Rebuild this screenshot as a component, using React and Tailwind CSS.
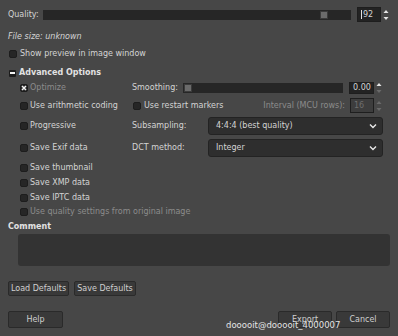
import React from 'react';

function Box({ checked }) {
  return (
    <span className="w-[8px] h-[8px] shrink-0 rounded-[2px] bg-[#262626] border border-[#1d1d1d] flex items-center justify-center">
      {checked && (
        <svg width="6" height="6" viewBox="0 0 6 6">
          <path d="M1 1 L5 5 M5 1 L1 5" stroke="#f2f2f2" strokeWidth="1.5" />
        </svg>
      )}
    </span>
  );
}

function Check({ label, checked, disabled, className = '' }) {
  return (
    <div className={`flex items-center gap-[2px] ${className}`}>
      <Box checked={checked} />
      <span className={disabled ? 'text-[#8c8c8c]' : ''}>{label}</span>
    </div>
  );
}

function Arrows({ downOff, allOff }) {
  const up = allOff ? '#6a6a6a' : '#e6e6e6';
  const down = allOff || downOff ? '#6a6a6a' : '#e6e6e6';
  return (
    <div className="w-[9px] flex flex-col justify-center gap-[2px] items-center">
      <svg width="6" height="5" viewBox="0 0 6 5">
        <path d="M0.5 4 L3 1 L5.5 4 Z" fill={up} />
      </svg>
      <svg width="6" height="5" viewBox="0 0 6 5">
        <path d="M0.5 1 L3 4 L5.5 1 Z" fill={down} />
      </svg>
    </div>
  );
}

function Spin({ value, w, cursor, downOff, disabled }) {
  return (
    <div className={`${w} h-full flex shrink-0`}>
      <div className={`flex-1 flex items-center pl-[3px] border border-[#1e1e1e] ${disabled ? 'bg-[#3d3d3d] text-[#6d6d6d]' : 'bg-[#232323]'}`}>
        {cursor && <span className="w-px h-[9px] bg-[#e0e0e0] mr-[1px]" />}
        {value}
      </div>
      <Arrows downOff={downOff} allOff={disabled} />
    </div>
  );
}

function Combo({ value }) {
  return (
    <div className="flex-1 h-full flex items-center justify-between pl-[7px] pr-[5px] bg-[#2e2e2e] border border-[#232323] rounded-[3px]">
      <span>{value}</span>
      <svg width="8" height="6" viewBox="0 0 8 6">
        <path d="M1 1.5 L4 4.5 L7 1.5" stroke="#e8e8e8" strokeWidth="1.4" fill="none" />
      </svg>
    </div>
  );
}

function Btn({ children, w }) {
  return (
    <button className={`${w} h-full bg-[#393939] border border-[#2a2a2a] rounded-[2px] text-[#d0d0d0] flex items-center justify-center`}>
      {children}
    </button>
  );
}

export default function App() {
  return (
    <div className="w-[398px] h-[336px] bg-[#474747] text-[#d4d4d4] text-[8px] leading-none font-['DejaVu_Sans',sans-serif] relative overflow-hidden px-[8px] flex flex-col">
      <div className="mt-[7px] h-[15px] flex items-center">
        <span>Quality:</span>
        <div className="ml-[4px] flex-1 h-[10px] bg-[#262626] relative">
          <div className="absolute left-[277px] top-[1px] w-[8px] h-[8px] bg-[#6b6b6b] border border-[#3b3b3b]" />
        </div>
        <div className="ml-[6px] h-full">
          <Spin value="92" w="w-[33px]" cursor />
        </div>
      </div>

      <div className="mt-[10px] h-[10px] flex items-center italic">File size: unknown</div>

      <Check label="Show preview in image window" className="mt-[7px] h-[10px] ml-[1px] gap-[3px]" />

      <div className="mt-[9px] h-[10px] flex items-center gap-[3px] ml-[1px] font-bold text-[#e2e2e2]">
        <span className="w-[7px] h-[7px] rounded-[1px] bg-[#1c1c1c] flex items-center justify-center">
          <span className="w-[5px] h-[1.5px] bg-[#f2f2f2]" />
        </span>
        Advanced Options
      </div>

      <div className="mt-[3px] pl-[12px] pr-[7px] flex flex-col">
        <div className="h-[13px] flex items-center">
          <Check label="Optimize" checked disabled className="w-[112px]" />
          <span className="w-[51px]">Smoothing:</span>
          <div className="flex-1 h-[10px] bg-[#262626] relative">
            <div className="absolute left-[1px] top-[1px] w-[8px] h-[8px] bg-[#6b6b6b] border border-[#3b3b3b]" />
          </div>
          <div className="ml-[6px] h-[12px]">
            <Spin value="0.00" w="w-[34px]" downOff />
          </div>
        </div>

        <div className="mt-[4px] h-[15px] flex items-center">
          <Check label="Use arithmetic coding" className="w-[113px]" />
          <Check label="Use restart markers" className="gap-[3px]" />
          <span className="ml-auto text-[#8c8c8c]">Interval (MCU rows):</span>
          <div className="ml-[5px] h-full">
            <Spin value="16" w="w-[33px]" disabled />
          </div>
        </div>

        <div className="mt-[4px] h-[18px] flex items-center">
          <Check label="Progressive" className="w-[112px]" />
          <span className="w-[76px]">Subsampling:</span>
          <Combo value="4:4:4 (best quality)" />
        </div>

        <div className="mt-[4px] h-[18px] flex items-center">
          <Check label="Save Exif data" className="w-[112px]" />
          <span className="w-[76px]">DCT method:</span>
          <Combo value="Integer" />
        </div>

        <Check label="Save thumbnail" className="mt-[6px] h-[10px]" />
        <Check label="Save XMP data" className="mt-[5px] h-[10px]" />
        <Check label="Save IPTC data" className="mt-[5px] h-[10px]" />
        <Check label="Use quality settings from original image" disabled className="mt-[4px] h-[10px]" />
      </div>

      <div className="mt-[5px] h-[10px] flex items-center font-bold text-[#e2e2e2]">Comment</div>
      <div className="mt-[2px] ml-[10px] h-[32px] bg-[#333333] rounded-[3px]" />

      <div className="mt-[15px] h-[15px] flex gap-[5px]">
        <Btn w="w-[61px]">Load Defaults</Btn>
        <Btn w="w-[62px]">Save Defaults</Btn>
      </div>

      <div className="mt-[15px] h-[17px] flex">
        <Btn w="w-[55px]">Help</Btn>
        <div className="flex-1" />
        <Btn w="w-[54px]">Export</Btn>
        <div className="w-[4px]" />
        <Btn w="w-[54px]">Cancel</Btn>
      </div>

      <div className="absolute left-[226px] top-[321px] text-[8.5px] text-[#e4e4e4]">dooooit@dooooit_4000007</div>
    </div>
  );
}
